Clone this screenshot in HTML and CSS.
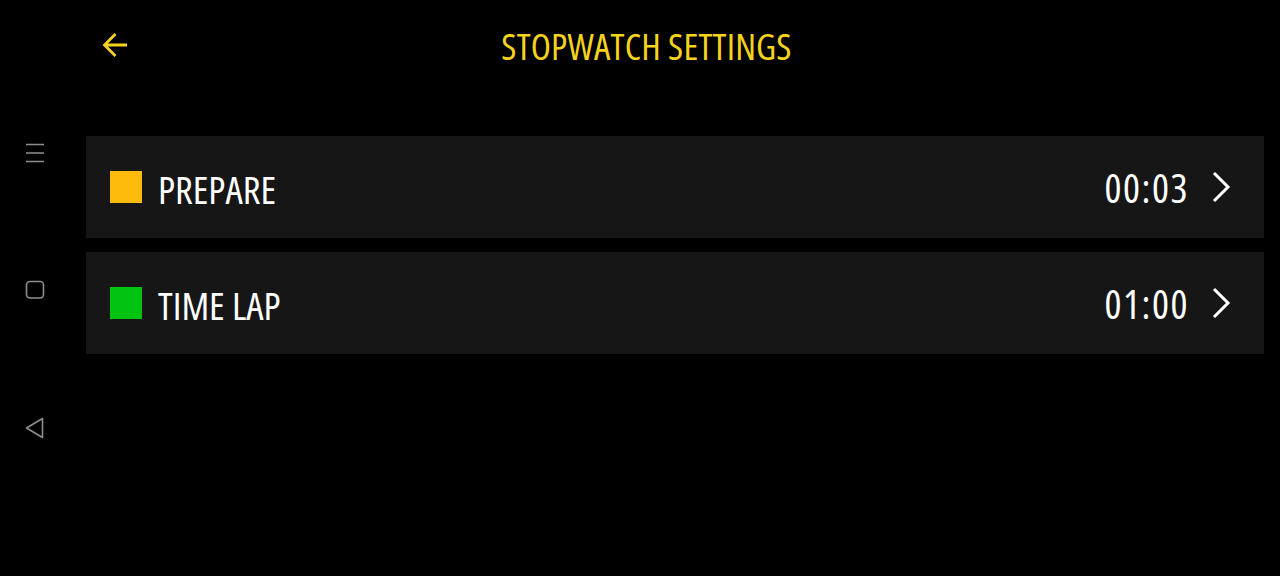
FILE: index.html
```html
<!DOCTYPE html>
<html lang="en">
<head>
<meta charset="utf-8">
<title>Stopwatch Settings</title>
<link rel="stylesheet" href="styles.css">
</head>
<body>
<div class="app">
  <nav class="rail">
    <svg class="rail-icon" width="20" height="20" viewBox="0 0 20 20"><path d="M1 1.5h18M1 10h18M1 18.5h18" fill="none" stroke="#8e8e8e" stroke-width="1.6"/></svg>
    <svg class="rail-icon" width="20" height="20" viewBox="0 0 20 20"><rect x="1.5" y="1.5" width="17" height="16.5" rx="3.5" fill="none" stroke="#8e8e8e" stroke-width="1.6"/></svg>
    <svg class="rail-icon" width="20" height="22" viewBox="0 0 20 22"><path d="M17.5 1.5 L1.5 11 L17.5 20.5 Z" fill="none" stroke="#8e8e8e" stroke-width="1.6" stroke-linejoin="round"/></svg>
  </nav>
  <main class="main">
    <header class="header">
      <button class="back" aria-label="Back">
        <svg width="28" height="28" viewBox="0 0 28 28"><path d="M26 14H4M14.5 3L3.5 14L14.5 25" fill="none" stroke="#f5d31c" stroke-width="2.8"/></svg>
      </button>
      <h1 class="title">STOPWATCH SETTINGS</h1>
    </header>
    <section class="list">
      <div class="row">
        <span class="swatch swatch-prepare"></span>
        <span class="label">PREPARE</span>
        <span class="value">00:03</span>
        <svg class="chev" width="20" height="32" viewBox="0 0 20 32"><path d="M3 2L17 16L3 30" fill="none" stroke="#fff" stroke-width="3"/></svg>
      </div>
      <div class="row">
        <span class="swatch swatch-lap"></span>
        <span class="label">TIME LAP</span>
        <span class="value">01:00</span>
        <svg class="chev" width="20" height="32" viewBox="0 0 20 32"><path d="M3 2L17 16L3 30" fill="none" stroke="#fff" stroke-width="3"/></svg>
      </div>
    </section>
  </main>
</div>
</body>
</html>
```
FILE: styles.css
```css
html, body {
  margin: 0;
  padding: 0;
  background: #000;
  height: 100%;
}
body {
  font-family: "Open Sans", "Roboto", sans-serif;
  font-stretch: 75%;
  color: #fff;
}
.app {
  display: flex;
  height: 576px;
}
.rail {
  width: 70px;
  flex: none;
  display: flex;
  flex-direction: column;
  align-items: center;
  padding-top: 143px;
  gap: 117px;
  box-sizing: border-box;
}
.rail-icon {
  display: block;
}
.main {
  flex: 1;
  padding: 0 16px 0 16px;
  display: flex;
  flex-direction: column;
}
.header {
  height: 90px;
  display: flex;
  align-items: center;
}
.back {
  width: 58px;
  height: 58px;
  padding: 0;
  border: 0;
  background: none;
  display: flex;
  align-items: center;
  justify-content: center;
  flex: none;
}
.title {
  flex: 1;
  margin: 0;
  padding-right: 115px;
  text-align: center;
  font-size: 37px;
  font-weight: 500;
  color: #f5d31c;
  letter-spacing: 0.2px;
}
.list {
  display: flex;
  flex-direction: column;
  gap: 14px;
  padding-top: 46px;
}
.row {
  height: 102px;
  background: #161616;
  display: flex;
  align-items: center;
  padding: 0 33px 0 24px;
}
.swatch {
  width: 32px;
  height: 32px;
  flex: none;
}
.swatch-prepare { background: #ffbb0b; }
.swatch-lap { background: #00c411; }
.label {
  margin-left: 16px;
  flex: 1;
  font-size: 39px;
  font-weight: 500;
  line-height: 1;
  padding-top: 2px;
}
.value {
  font-size: 40px;
  font-weight: 500;
  letter-spacing: 1.5px;
  line-height: 1;
  padding-top: 2px;
}
.chev {
  margin-left: 22px;
  display: block;
}
```
